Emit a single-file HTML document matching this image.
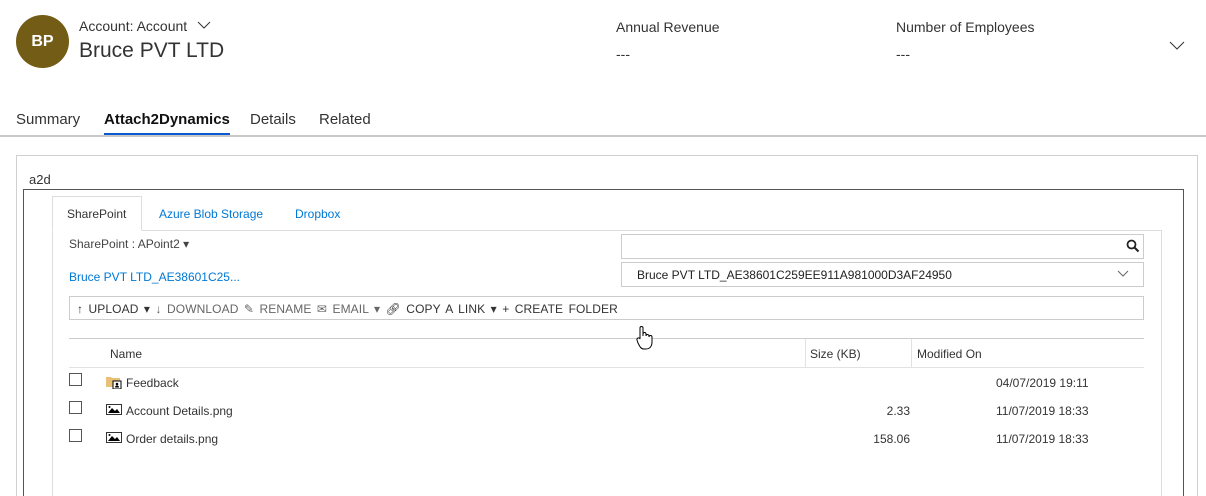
<!DOCTYPE html>
<html><head><meta charset="utf-8"><style>
*{margin:0;padding:0;box-sizing:border-box}
html,body{width:1206px;height:496px;overflow:hidden}
body{background:#fff;font-family:"Liberation Sans",sans-serif;color:#333;position:relative}
.a{position:absolute;white-space:nowrap}
.sm{font-size:12px}
.tb{font-size:12px;color:#666;letter-spacing:0.1px}
</style></head><body>
<div class="a" style="left:16px;top:15px;width:53px;height:53px;border-radius:50%;background:#735c15;color:#fff;font-weight:bold;font-size:16px;text-align:center;line-height:53px">BP</div>
<div class="a" style="left:79px;top:18px;font-size:14px;color:#333">Account: Account</div>
<svg class="a" style="left:197px;top:21px" width="14" height="10"><path d="M1 1l6 6 6-6" stroke="#333" fill="none"/></svg>
<div class="a" style="left:79px;top:39px;font-size:21px;color:#333">Bruce PVT LTD</div>
<div class="a" style="left:616px;top:19px;font-size:14px">Annual Revenue</div>
<div class="a" style="left:616px;top:46px;font-size:14px">---</div>
<div class="a" style="left:896px;top:19px;font-size:14px">Number of Employees</div>
<div class="a" style="left:896px;top:46px;font-size:14px">---</div>
<svg class="a" style="left:1169px;top:41px" width="16" height="10"><path d="M1 1l7 7 7-7" stroke="#333" fill="none"/></svg>
<div class="a" style="left:16px;top:111px;font-size:15px">Summary</div>
<div class="a" style="left:104px;top:111px;font-size:15px;font-weight:bold;color:#111">Attach2Dynamics</div>
<div class="a" style="left:104px;top:133px;width:126px;height:3px;background:#0b5ad1"></div>
<div class="a" style="left:250px;top:111px;font-size:15px">Details</div>
<div class="a" style="left:319px;top:111px;font-size:15px">Related</div>
<div class="a" style="left:0;top:135px;width:1206px;height:2px;background:#c8c8c8"></div>
<div class="a" style="left:16px;top:155px;width:1182px;height:341px;border:1px solid #d0d0d0;border-bottom:none"></div>
<div class="a" style="left:29px;top:172px;font-size:13px">a2d</div>
<div class="a" style="left:23px;top:189px;width:1161px;height:307px;border:1px solid #555;border-bottom:none"></div>
<div class="a" style="left:52px;top:230px;width:1110px;height:266px;border:1px solid #ddd;border-bottom:none"></div>
<div class="a" style="left:52px;top:196px;width:90px;height:35px;border:1px solid #ddd;border-bottom:1px solid #fff;background:#fff"></div>
<div class="a sm" style="left:67px;top:207px;color:#333">SharePoint</div>
<div class="a sm" style="left:159px;top:207px;color:#0078d4">Azure Blob Storage</div>
<div class="a sm" style="left:295px;top:207px;color:#0078d4">Dropbox</div>
<div class="a sm" style="left:69px;top:237px;color:#444">SharePoint : APoint2 ▾</div>
<div class="a sm" style="left:69px;top:270px;color:#0078d4">Bruce PVT LTD_AE38601C25...</div>
<div class="a" style="left:621px;top:234px;width:523px;height:25px;border:1px solid #ccc"></div>
<svg class="a" style="left:1126px;top:239px" width="14" height="14"><circle cx="5.5" cy="5.5" r="4" stroke="#222" stroke-width="1.8" fill="none"/><path d="M8.5 8.5l4 4" stroke="#222" stroke-width="2"/></svg>
<div class="a" style="left:621px;top:262px;width:523px;height:25px;border:1px solid #ccc"></div>
<div class="a sm" style="left:637px;top:268px;color:#222">Bruce PVT LTD_AE38601C259EE911A981000D3AF24950</div>
<svg class="a" style="left:1117px;top:270px" width="12" height="8"><path d="M1 1l5 5 5-5" stroke="#666" fill="none"/></svg>
<div class="a" style="left:69px;top:296px;width:1075px;height:24px;border:1px solid #ccc"></div>
<div class="a tb" style="left:77px;top:302px;word-spacing:2px"><span style="color:#333">↑ UPLOAD ▾</span> ↓ DOWNLOAD ✎ RENAME ✉ EMAIL ▾ <span style="color:#333">🔗︎ COPY A LINK ▾ + CREATE FOLDER</span></div>
<div class="a" style="left:69px;top:338px;width:1075px;height:1px;background:#ccc"></div>
<div class="a" style="left:69px;top:367px;width:1075px;height:1px;background:#e2e2e2"></div>
<div class="a" style="left:805px;top:339px;width:1px;height:28px;background:#e2e2e2"></div>
<div class="a" style="left:911px;top:339px;width:1px;height:28px;background:#e2e2e2"></div>
<div class="a sm" style="left:110px;top:347px">Name</div>
<div class="a sm" style="left:810px;top:347px">Size (KB)</div>
<div class="a sm" style="left:917px;top:347px">Modified On</div>
<div class="a" style="left:69px;top:373px;width:13px;height:13px;border:1px solid #555"></div>
<div class="a" style="left:69px;top:401px;width:13px;height:13px;border:1px solid #555"></div>
<div class="a" style="left:69px;top:429px;width:13px;height:13px;border:1px solid #555"></div>
<svg class="a" style="left:106px;top:375px" width="16" height="14"><path d="M0 2h5l1 1h8v9H0z" fill="#e8c078"/><rect x="7" y="6" width="8" height="8" fill="#fff" stroke="#000"/><circle cx="11" cy="9" r="1.3"/><path d="M9 12.5a2 2 0 0 1 4 0z"/></svg>
<div class="a sm" style="left:126px;top:376px">Feedback</div>
<svg class="a" style="left:106px;top:404px" width="16" height="11"><rect x=".5" y=".5" width="15" height="10" fill="#fff" stroke="#333"/><path d="M2 9l4-5 3 3 2-2 3 4z" fill="#000"/><circle cx="3.5" cy="3" r="1"/></svg>
<div class="a sm" style="left:126px;top:404px">Account Details.png</div>
<svg class="a" style="left:106px;top:432px" width="16" height="11"><rect x=".5" y=".5" width="15" height="10" fill="#fff" stroke="#333"/><path d="M2 9l4-5 3 3 2-2 3 4z" fill="#000"/><circle cx="3.5" cy="3" r="1"/></svg>
<div class="a sm" style="left:126px;top:432px">Order details.png</div>
<div class="a sm" style="left:996px;top:376px">04/07/2019 19:11</div>
<div class="a sm" style="left:860px;top:404px;width:50px;text-align:right">2.33</div>
<div class="a sm" style="left:996px;top:404px">11/07/2019 18:33</div>
<div class="a sm" style="left:860px;top:432px;width:50px;text-align:right">158.06</div>
<div class="a sm" style="left:996px;top:432px">11/07/2019 18:33</div>
<svg class="a" style="left:635px;top:325px" width="18" height="26"><path d="M5 12V3a1.5 1.5 0 0 1 3 0v8V9a1.5 1.5 0 0 1 3 0v2a1.5 1.5 0 0 1 3 0v1a1.5 1.5 0 0 1 3 0v5c0 4-2 7-6 7h-2c-3 0-4-2-6-6l-1-3a1.5 1.5 0 0 1 3-1z" fill="#fff" stroke="#000"/></svg>
</body></html>
